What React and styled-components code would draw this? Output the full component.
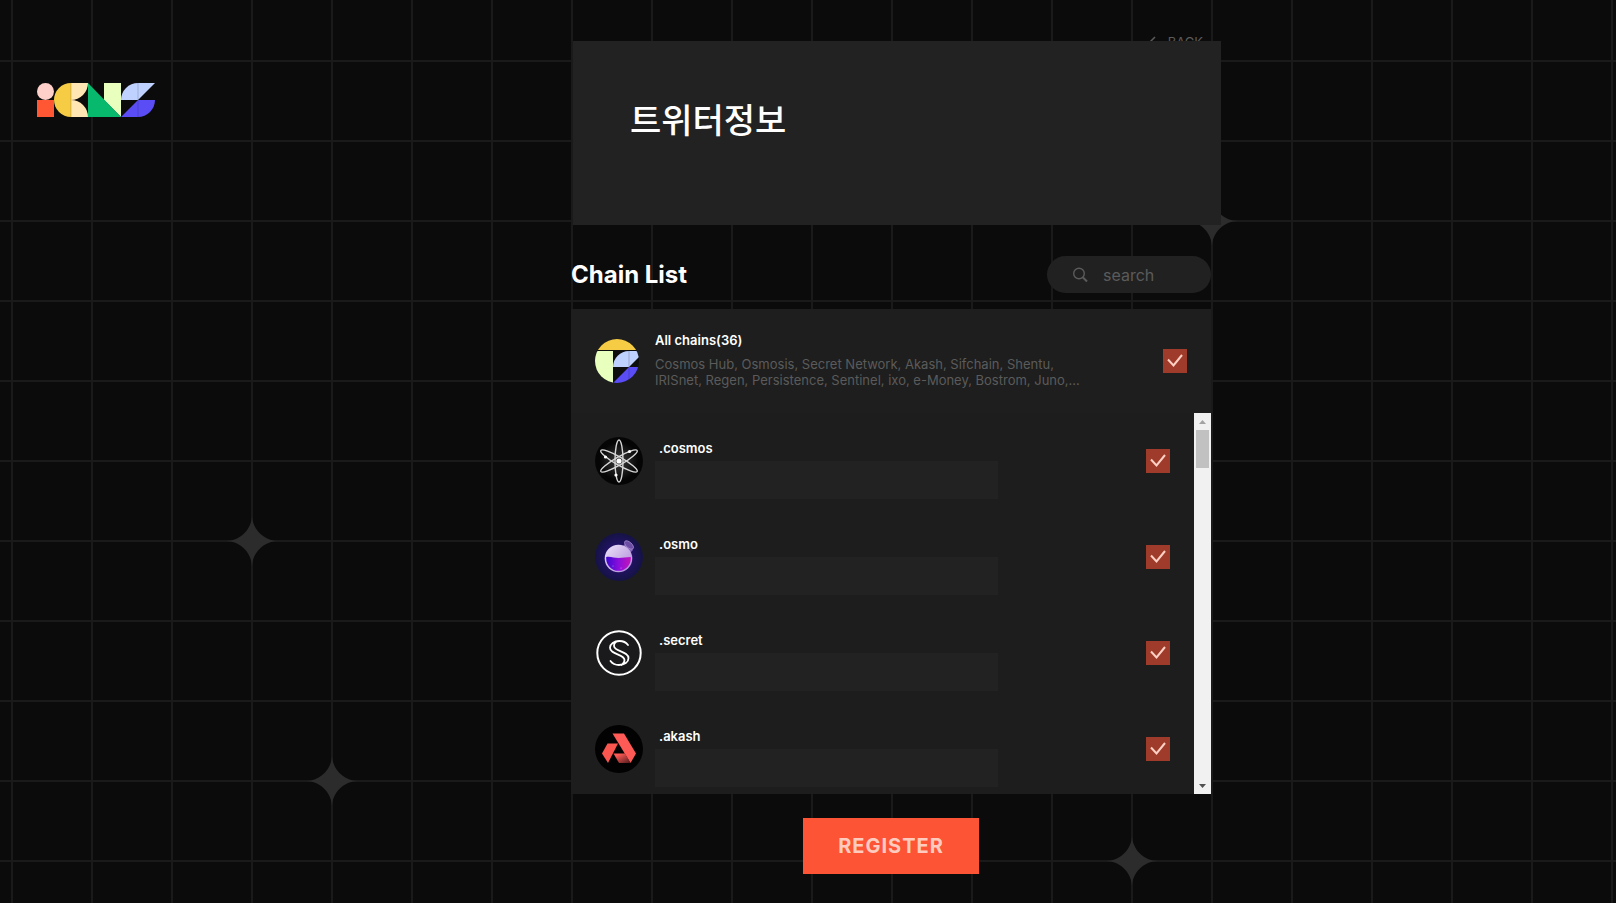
import React, { useState } from "react";
import styled, { createGlobalStyle } from "styled-components";

const GlobalStyle = createGlobalStyle`
  * {
    box-sizing: border-box;
  }
  body {
    margin: 0;
    background-color: #0b0b0b;
    color: #fff;
    font-family: Inter, "Noto Sans CJK KR", sans-serif;
  }
`;

const Page = styled.div`
  position: relative;
  display: flex;
  min-height: 100vh;
  overflow: hidden;
  background-image: linear-gradient(#1a1a1a 2px, transparent 2px),
    linear-gradient(90deg, #1a1a1a 2px, transparent 2px);
  background-size: 80px 80px;
  background-position: 11px 60px;
`;

const Star = styled.svg`
  position: absolute;
  left: ${props => props.$col * 80 - 14}px;
  top: ${props => props.$row * 80 - 45}px;
  width: 52px;
  height: 52px;
  fill: #2c2c2c;
`;

const Side = styled.header`
  flex: none;
  width: 166px;
  padding: 83px 0 0 37px;
`;

const LogoLink = styled.a`
  display: block;
  svg {
    display: block;
  }
`;

const Main = styled.main`
  position: relative;
  flex: 1;
  display: flex;
  flex-direction: column;
  align-items: center;
  padding: 32px 0 29px;
`;

const Column = styled.div`
  width: 640px;
`;

const BackButton = styled.button`
  display: flex;
  align-items: center;
  gap: 12px;
  height: 20px;
  margin-left: auto;
  padding: 0 8px;
  border: 0;
  background: none;
  color: #5b5b5b;
  font-family: inherit;
  font-size: 13px;
  cursor: pointer;
`;

const TwitterPanel = styled.section`
  position: relative;
  height: 184px;
  margin: -11px -10px 0 2px;
  padding: 56px 57px;
  background-color: #222;
`;

const PanelTitle = styled.h1`
  margin: 0;
  font-size: 34px;
  font-weight: 500;
  line-height: 48px;
`;

const ListHead = styled.div`
  display: flex;
  align-items: center;
  justify-content: space-between;
  margin: 31px 0 16px;
`;

const ListTitle = styled.h2`
  margin: 0;
  font-size: 24px;
  font-weight: 700;
  line-height: 36px;
`;

const SearchBox = styled.label`
  display: flex;
  align-items: center;
  gap: 14px;
  width: 164px;
  height: 37px;
  padding: 0 24px;
  border-radius: 20px;
  background-color: #212121;
  svg {
    flex: none;
  }
`;

const SearchInput = styled.input`
  flex: 1;
  min-width: 0;
  height: 20px;
  padding: 0;
  border: 0;
  outline: 0;
  background: none;
  color: #fff;
  font-family: inherit;
  font-size: 16px;
  &::placeholder {
    color: #5b5b5b;
  }
`;

const Card = styled.section`
  background-color: #1d1d1d;
`;

const AllRow = styled.div`
  display: flex;
  align-items: center;
  gap: 16px;
  height: 104px;
  padding: 0 24px;
  background-color: #1e1e1e;
`;

const RowText = styled.div`
  flex: 1;
`;

const Name = styled.div`
  font-size: 13px;
  font-weight: 600;
  line-height: 22px;
`;

const Summary = styled.p`
  max-width: 432px;
  margin: 0;
  padding: 5px 0;
  color: #5b5b5b;
  font-size: 13px;
  line-height: 16px;
`;

const ListArea = styled.div`
  display: flex;
  height: 381px;
`;

const Rows = styled.ul`
  flex: 1;
  margin: 0;
  padding: 0;
  overflow: hidden;
  list-style: none;
`;

const Row = styled.li`
  display: flex;
  gap: 16px;
  height: 96px;
  padding: 24px;
`;

const Address = styled.div`
  width: 343px;
  height: 38px;
  margin: 2px 0 0 -4px;
  background-color: #222;
`;

const Check = styled.label`
  position: relative;
  flex: none;
  align-self: center;
  width: 24px;
  height: 24px;
  svg {
    position: absolute;
    inset: 0;
    pointer-events: none;
  }
`;

const CheckInput = styled.input`
  display: block;
  width: 24px;
  height: 24px;
  margin: 0;
  appearance: none;
  background-color: #2c2c2c;
  &:checked {
    background-color: #9e3b2a;
  }
`;

const Scrollbar = styled.div`
  display: flex;
  flex-direction: column;
  width: 17px;
  background-color: #f1f1f1;
`;

const ScrollButton = styled.button`
  display: flex;
  align-items: center;
  justify-content: center;
  height: 17px;
  padding: 0;
  border: 0;
  background: none;
  color: ${props => (props.$muted ? "#a3a3a3" : "#505050")};
`;

const ScrollTrack = styled.div`
  flex: 1;
  padding: 0 2px;
`;

const ScrollThumb = styled.div`
  height: 38px;
  background-color: #c1c1c1;
`;

const RegisterButton = styled.button`
  width: 176px;
  height: 56px;
  margin-top: 24px;
  border: 0;
  background-color: #fc5434;
  color: #ffcbbf;
  font-family: inherit;
  font-size: 20px;
  font-weight: 700;
  letter-spacing: 1px;
  cursor: pointer;
`;

const Logo = () => (
  <svg width="118" height="34" viewBox="0 0 118 34">
    <circle cx="8.5" cy="8.5" r="8.5" fill="#ffcfc9" />
    <path d="M0 17h17v17H0z" fill="#ff5634" />
    <path d="M34 0a17 17 0 0 0 0 34z" fill="#f6cc45" />
    <path d="M34 0h17a17 17 0 0 1-17 17zM34 34h17a17 17 0 0 0-17-17z" fill="#ffe6b3" />
    <path d="M67 0h17v34L67 17z" fill="#e8ffbd" />
    <path d="M51 0l33 34H51z" fill="#07b96d" />
    <path d="M84 17a17 17 0 0 1 17-17h17l-17 17z" fill="#bfd1ff" />
    <path d="M84 34l17-17h17a17 17 0 0 1-17 17z" fill="#5a4df6" />
    <path d="M34 0v34M101 0v34" stroke="#0a0a0a" strokeOpacity="0.3" strokeWidth="0.6" />
  </svg>
);

const AllChainsIcon = () => (
  <svg width="44" height="44" viewBox="0 0 44 44">
    <clipPath id="all-clip">
      <circle cx="22" cy="22" r="22" />
    </clipPath>
    <g clipPath="url(#all-clip)">
      <path d="M0 0h44v44H0z" fill="#0e0e0e" />
      <path d="M0 0h44v11H0z" fill="#f6cc45" />
      <path d="M0 12h18v32H0z" fill="#e8ffbd" />
      <path d="M18 28a16 16 0 0 1 16-16h16L34 28z" fill="#bfd1ff" />
      <path d="M18 44l16-16h16a16 16 0 0 1-16 16z" fill="#5a4df6" />
      <path d="M34 12v32" stroke="#0a0a0a" strokeOpacity="0.35" strokeWidth="0.6" />
    </g>
  </svg>
);

const CosmosIcon = () => (
  <svg width="48" height="48" viewBox="0 0 48 48">
    <defs>
      <radialGradient id="cosmos-bg">
        <stop offset="0" stopColor="#3c3c3c" />
        <stop offset="0.8" stopColor="#050505" />
      </radialGradient>
    </defs>
    <circle cx="24" cy="24" r="24" fill="url(#cosmos-bg)" />
    <g fill="none" stroke="#d6d6d6" strokeWidth="1.4">
      <ellipse cx="24" cy="24" rx="4" ry="21" />
      <ellipse cx="24" cy="24" rx="4" ry="21" transform="rotate(60 24 24)" />
      <ellipse cx="24" cy="24" rx="4" ry="21" transform="rotate(-60 24 24)" />
    </g>
    <g fill="#fff">
      <circle cx="24" cy="24" r="2.6" />
      <circle cx="10.5" cy="20" r="1.6" />
      <circle cx="34.5" cy="14.5" r="1.6" />
      <circle cx="21" cy="38" r="1.6" />
    </g>
  </svg>
);

const OsmoIcon = () => (
  <svg width="48" height="48" viewBox="0 0 48 48">
    <defs>
      <radialGradient id="osmo-bg">
        <stop offset="0.5" stopColor="#221267" />
        <stop offset="1" stopColor="#151344" />
      </radialGradient>
      <linearGradient id="osmo-glass" x1="0" x2="1" y2="1">
        <stop offset="0" stopColor="#efe5fa" />
        <stop offset="1" stopColor="#a983d6" />
      </linearGradient>
      <linearGradient id="osmo-fluid" x1="0" x2="1">
        <stop offset="0" stopColor="#3d08cf" />
        <stop offset="0.5" stopColor="#8a0fdc" />
        <stop offset="1" stopColor="#c316b8" />
      </linearGradient>
    </defs>
    <circle cx="24" cy="24" r="24" fill="url(#osmo-bg)" />
    <path d="M28 13l3-3 7 7-3 3z" fill="#8061b5" />
    <ellipse
      cx="34"
      cy="12"
      rx="5.5"
      ry="2.8"
      transform="rotate(42 34 12)"
      fill="#6c4ea3"
      stroke="#a98bd3"
      strokeWidth="0.8"
    />
    <circle cx="23.5" cy="25.5" r="13.8" fill="url(#osmo-glass)" />
    <path
      d="M11.2 24c4-1 8 1 12.300 1s8-1 12.300-1v1.500a12.300 12.300 0 0 1-24.600 0z"
      fill="url(#osmo-fluid)"
    />
    <circle cx="18" cy="33" r="0.6" fill="#7da1ff" />
    <circle cx="26" cy="35" r="0.6" fill="#ef7cff" />
  </svg>
);

const SecretIcon = () => (
  <svg width="48" height="48" viewBox="0 0 48 48" fill="none" stroke="#fff" strokeLinecap="round">
    <circle cx="24" cy="24" r="21.7" fill="#1a1a1c" strokeWidth="2" />
    <path
      d="M33 16c-2-2.800-5-4-8.500-4-5.500 0-9.500 2.800-9.500 6.800 0 7 14.500 6 14.500 12.200 0 2-1 3.800-3 5M24.500 12c-3.500 0-5.500 2-5.500 4.800 0 6.300 14.500 5 14.500 12.400 0 4-4 6.800-9.500 6.800-3.500 0-6.500-1.200-8.500-4"
      strokeWidth="1.8"
    />
  </svg>
);

const AkashIcon = () => (
  <svg width="48" height="48" viewBox="0 0 48 48">
    <defs>
      <linearGradient id="akash-fade" x1="0" x2="1" y1="0" y2="1">
        <stop offset="0.2" stopColor="#ff5a55" />
        <stop offset="1" stopColor="#4d1a1c" />
      </linearGradient>
    </defs>
    <circle cx="24" cy="24" r="24" fill="#020202" />
    <path d="M17.500 8.500h11.500L41 28.500 35.500 38z" fill="#ff5a55" />
    <path d="M12.500 18.500H23L13 38 7 28.500z" fill="#f9564f" />
    <path d="M18.500 28.500H30L35.500 38H24z" fill="url(#akash-fade)" />
  </svg>
);

const SearchIcon = () => (
  <svg width="18" height="18" viewBox="0 0 18 18" fill="none" stroke="#5b5b5b" strokeWidth="1.4">
    <circle cx="8" cy="7.5" r="5.3" />
    <path d="M12 11.500l4 4" strokeWidth="2" />
  </svg>
);

const chains = [
  { name: ".cosmos", Icon: CosmosIcon },
  { name: ".osmo", Icon: OsmoIcon },
  { name: ".secret", Icon: SecretIcon },
  { name: ".akash", Icon: AkashIcon }
];

// grid intersections that carry a star
const stars = [
  [3, 7],
  [4, 10],
  [14, 11],
  [15, 3]
];

const CheckBox = ({ label, checked, onChange }) => (
  <Check>
    <CheckInput type="checkbox" aria-label={label} checked={checked} onChange={onChange} />
    {checked ? (
      <svg width="24" height="24" viewBox="0 0 24 24" fill="none" stroke="#ffd0c4" strokeWidth="2">
        <path d="M5 10.500l5.500 6L19 6" />
      </svg>
    ) : null}
  </Check>
);

export default function App() {
  const [checked, setChecked] = useState(chains.map(() => true));
  const [search, setSearch] = useState("");
  const allChecked = checked.every(Boolean);

  const toggle = index =>
    setChecked(checked.map((value, i) => (i === index ? !value : value)));

  return (
    <Page>
      <GlobalStyle />
      {stars.map(([col, row]) => (
        <Star key={col} $col={col} $row={row} viewBox="0 0 48 48">
          <path d="M24 0c0 13 11 24 24 24-13 0-24 11-24 24 0-13-11-24-24-24 13 0 24-11 24-24z" />
        </Star>
      ))}
      <Side>
        <LogoLink href="#" aria-label="ICNS">
          <Logo />
        </LogoLink>
      </Side>
      <Main>
        <Column>
          <BackButton type="button">
            <svg width="8" height="12" viewBox="0 0 8 12" fill="none" stroke="currentColor" strokeWidth="1.5">
              <path d="M7 1L2 6l5 5" />
            </svg>
            BACK
          </BackButton>
          <TwitterPanel>
            <PanelTitle lang="ko">트위터정보</PanelTitle>
          </TwitterPanel>
          <ListHead>
            <ListTitle>Chain List</ListTitle>
            <SearchBox>
              <SearchIcon />
              <SearchInput
                placeholder="search"
                aria-label="search"
                value={search}
                onChange={e => setSearch(e.target.value)}
              />
            </SearchBox>
          </ListHead>
          <Card>
            <AllRow>
              <AllChainsIcon />
              <RowText>
                <Name>All chains(36)</Name>
                <Summary>
                  Cosmos Hub, Osmosis, Secret Network, Akash, Sifchain, Shentu,
                  IRISnet, Regen, Persistence, Sentinel, ixo, e-Money, Bostrom,
                  Juno,...
                </Summary>
              </RowText>
              <CheckBox
                label="All chains"
                checked={allChecked}
                onChange={() => setChecked(chains.map(() => !allChecked))}
              />
            </AllRow>
            <ListArea>
              <Rows>
                {chains.map(({ name, Icon }, index) =>
                  name.includes(search) ? (
                    <Row key={name}>
                      <Icon />
                      <RowText>
                        <Name>{name}</Name>
                        <Address />
                      </RowText>
                      <CheckBox
                        label={name}
                        checked={checked[index]}
                        onChange={() => toggle(index)}
                      />
                    </Row>
                  ) : null
                )}
              </Rows>
              <Scrollbar>
                <ScrollButton type="button" aria-label="Scroll up" $muted>
                  <svg width="7" height="4" viewBox="0 0 7 4" fill="currentColor">
                    <path d="M0 4l3.500-4L7 4z" />
                  </svg>
                </ScrollButton>
                <ScrollTrack>
                  <ScrollThumb />
                </ScrollTrack>
                <ScrollButton type="button" aria-label="Scroll down">
                  <svg width="7" height="4" viewBox="0 0 7 4" fill="currentColor">
                    <path d="M0 0h7L3.500 4z" />
                  </svg>
                </ScrollButton>
              </Scrollbar>
            </ListArea>
          </Card>
        </Column>
        <RegisterButton type="button">REGISTER</RegisterButton>
      </Main>
    </Page>
  );
}
